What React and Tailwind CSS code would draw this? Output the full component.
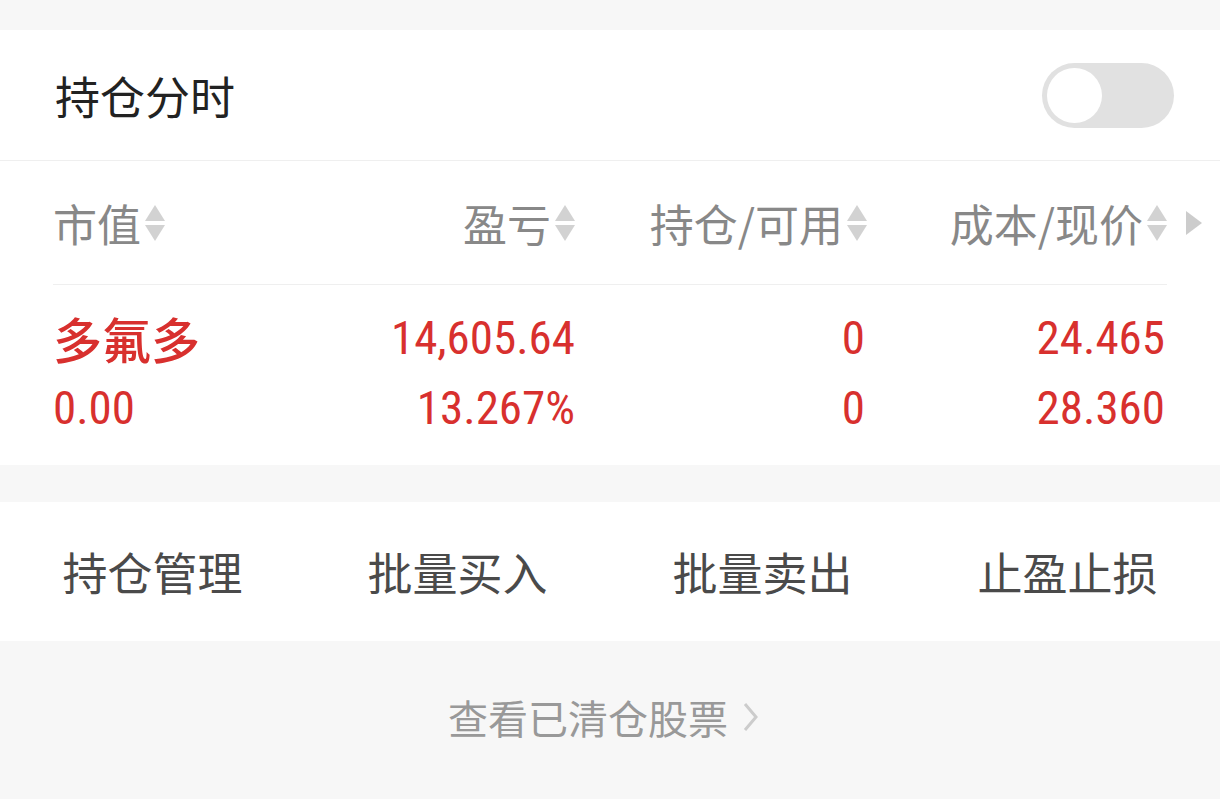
import React, { useState } from 'react';

const cjk = { fontFamily: '"Noto Sans CJK SC", "Noto Sans", sans-serif' };
const num = { fontFamily: '"Liberation Sans Narrow", "Roboto Condensed", "DejaVu Sans Condensed", Roboto, sans-serif' };

const SortIcon = () => (
    <svg width="20" height="38" viewBox="0 0 20 38" className="ml-1 shrink-0">
        <polygon points="10,1 20,17 0,17" fill="#d2d2d2" />
        <polygon points="0,21 20,21 10,37" fill="#d2d2d2" />
    </svg>
);

const HeaderCell = ({ label, className }) => (
    <div className={`flex items-center ${className}`}>
        <span>{label}</span>
        <SortIcon />
    </div>
);

const positions = [
    { name: '多氟多', value: '0.00', pnl: '14,605.64', pnlPct: '13.267%', hold: '0', avail: '0', cost: '24.465', price: '28.360' },
];

const actions = ['持仓管理', '批量买入', '批量卖出', '止盈止损'];

const App = () => {
    const [intraday, setIntraday] = useState(false);

    return (
        <div className="min-h-[799px] w-full bg-[#f7f7f7]" style={cjk}>
            <div className="h-[30px]" />

            <div className="bg-white">
                {/* title row */}
                <div className="flex h-[131px] items-center justify-between pl-[55px] pr-[46px] border-b border-[#efefef]">
                    <span className="text-[45px] leading-none text-[#222]">持仓分时</span>
                    <button
                        onClick={() => setIntraday(!intraday)}
                        className={`relative h-[65px] w-[132px] rounded-full transition-colors ${intraday ? 'bg-[#e0302e]' : 'bg-[#e1e1e1]'}`}
                    >
                        <span
                            className={`absolute top-[5px] h-[55px] w-[55px] rounded-full bg-white transition-all ${intraday ? 'left-[72px]' : 'left-[5px]'}`}
                        />
                    </button>
                </div>

                {/* table */}
                <div className="relative ml-[53px] mr-[53px]">
                    <div className="flex h-[124px] items-center text-[44px] leading-none text-[#888] border-b border-[#efefef]">
                        <HeaderCell label="市值" className="flex-1" />
                        <HeaderCell label="盈亏" className="w-[292px] justify-end" />
                        <HeaderCell label="持仓/可用" className="w-[292px] justify-end" />
                        <HeaderCell label="成本/现价" className="w-[300px] justify-end" />
                        <svg width="16" height="24" viewBox="0 0 16 24" className="absolute right-[-35px] top-[50px]">
                            <polygon points="0,0 16,12 0,24" fill="#cccccc" />
                        </svg>
                    </div>

                    {positions.map((p) => (
                        <div key={p.name} className="pt-[17px] pb-[23px] text-[#d8302e]">
                            <div className="flex h-[70px] items-center">
                                <div className="flex-1 text-[49px] leading-none font-medium">{p.name}</div>
                                <div className="w-[292px] text-right text-[47px] leading-none" style={num}>{p.pnl}</div>
                                <div className="w-[292px] text-right text-[47px] leading-none pr-[2px]" style={num}>{p.hold}</div>
                                <div className="w-[300px] text-right text-[47px] leading-none pr-[2px]" style={num}>{p.cost}</div>
                            </div>
                            <div className="flex h-[70px] items-center">
                                <div className="flex-1 text-[47px] leading-none" style={num}>{p.value}</div>
                                <div className="w-[292px] text-right text-[47px] leading-none" style={num}>{p.pnlPct}</div>
                                <div className="w-[292px] text-right text-[47px] leading-none pr-[2px]" style={num}>{p.avail}</div>
                                <div className="w-[300px] text-right text-[47px] leading-none pr-[2px]" style={num}>{p.price}</div>
                            </div>
                        </div>
                    ))}
                </div>
            </div>

            <div className="h-[37px]" />

            {/* action bar */}
            <div className="grid h-[139px] grid-cols-4 items-center bg-white">
                {actions.map((a) => (
                    <button key={a} className="text-center text-[45px] leading-none text-[#4a4a4a]">
                        {a}
                    </button>
                ))}
            </div>

            {/* cleared stocks link */}
            <div className="flex items-center justify-center pt-[56px] pr-[12px] text-[40px] leading-none text-[#999]">
                <span>查看已清仓股票</span>
                <svg width="20" height="32" viewBox="0 0 20 32" className="ml-[12px]">
                    <polyline points="5,3 16,16 5,29" fill="none" stroke="#cccccc" strokeWidth="3" />
                </svg>
            </div>
        </div>
    );
};

export default App;
